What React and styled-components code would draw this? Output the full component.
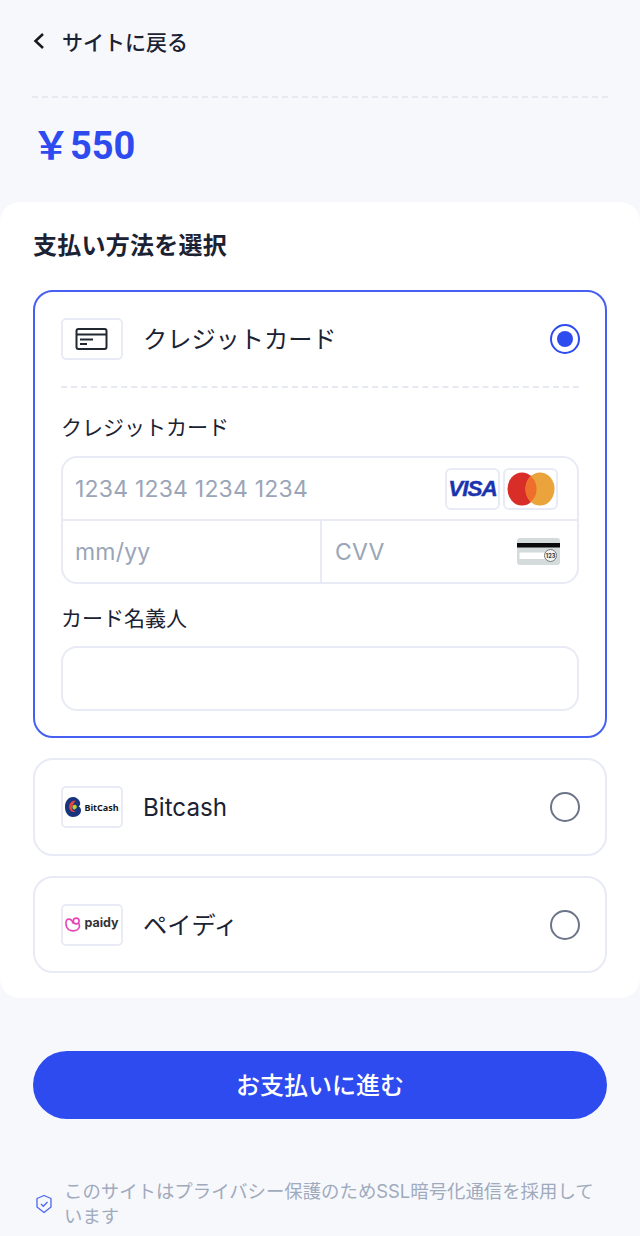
import styled, { createGlobalStyle } from "styled-components";

const GlobalStyle = createGlobalStyle`
    html, body {
        margin: 0;
        padding: 0;
        background: #f7f8fc;
    }
    * {
        box-sizing: border-box;
    }
    body {
        font-family: Inter, "Noto Sans CJK JP", sans-serif;
        color: #1a2233;
    }
`;

const Page = styled.div`
    width: 640px;
    height: 1236px;
    overflow: hidden;
    background: #f7f8fc;
`;
const Top = styled.div`
    padding: 0 32px;
    height: 202px;
`;
const BackRow = styled.div`
    height: 98px;
    padding-bottom: 14px;
    display: flex;
    align-items: center;
    gap: 15px;
    font-size: 21px;
    font-weight: 500;
    border-bottom: 2px dashed #e6e9f2;
`;
const Price = styled.div`
    margin-top: 23px;
    height: 50px;
    line-height: 50px;
    font-size: 38px;
    font-weight: 700;
    color: #2e4bf0;
    font-family: Roboto, "Noto Sans CJK JP", sans-serif;
`;
const Panel = styled.div`
    background: #fff;
    border-radius: 20px;
    height: 796px;
    padding: 28px 33px 0;
`;
const PanelTitle = styled.div`
    height: 32px;
    line-height: 32px;
    font-size: 24px;
    font-weight: 700;
    letter-spacing: 0.25px;
    margin-bottom: 28px;
`;
const Card = styled.div`
    border: 2px solid ${(props) => (props.$active ? "#4560f2" : "#e8ebf5")};
    border-radius: 20px;
    padding: 0 26px;
    margin-bottom: 20px;
    height: ${(props) => props.$height}px;
`;
const CardHead = styled.div`
    display: flex;
    align-items: center;
    gap: 20px;
    height: ${(props) => props.$height}px;
    font-size: 24.2px;
    font-weight: 400;
`;
const LogoBox = styled.div`
    width: 62px;
    height: 42px;
    flex: none;
    border: 2px solid #e8ebf5;
    border-radius: 5px;
    background: #fff;
    display: flex;
    align-items: center;
    justify-content: center;
    gap: ${(props) => props.$gap || 0}px;
`;
const Name = styled.div`
    flex: 1;
    margin-bottom: ${(props) => (props.$raised ? "3px" : "0")};
`;
const Radio = styled.div`
    width: 30px;
    height: 30px;
    margin-right: -1px;
    border-radius: 50%;
    border: 2px solid ${(props) => (props.$checked ? "#2e4bf0" : "#6b7488")};
    display: flex;
    align-items: center;
    justify-content: center;
    &::after {
        content: "";
        display: ${(props) => (props.$checked ? "block" : "none")};
        width: 16px;
        height: 16px;
        border-radius: 50%;
        background: #2e4bf0;
    }
`;
const Dashed = styled.div`
    border-top: 2px dashed #e6e9f2;
`;
const Label = styled.div`
    height: 28px;
    line-height: 28px;
    font-size: 21px;
    margin-top: ${(props) => props.$top}px;
    margin-bottom: ${(props) => props.$bottom}px;
`;
const FormBox = styled.div`
    border: 2px solid #e8ebf5;
    border-radius: 16px;
    background: #fff;
`;
const NumberRow = styled.div`
    height: 63px;
    display: flex;
    align-items: center;
    justify-content: space-between;
    padding: 0 19px 0 12px;
    border-bottom: 2px solid #e8ebf5;
`;
const SplitRow = styled.div`
    height: 61px;
    display: grid;
    grid-template-columns: 257px 1fr;
`;
const SplitCell = styled.div`
    display: flex;
    align-items: center;
    justify-content: space-between;
    padding: 0 17px 0 ${(props) => (props.$divided ? "13px" : "12px")};
    border-left: ${(props) => (props.$divided ? "2px solid #e8ebf5" : "none")};
`;
const Placeholder = styled.span`
    font-size: 23px;
    color: #9aa5b8;
    letter-spacing: 0.2px;
`;
const BrandRow = styled.div`
    display: flex;
    gap: 3px;
`;
const BrandBox = styled.div`
    width: 55px;
    height: 42px;
    border: 2px solid #e8ebf5;
    border-radius: 6px;
    display: flex;
    align-items: center;
    justify-content: center;
`;
const VisaText = styled.span`
    font-family: "Liberation Sans", sans-serif;
    font-size: 22.5px;
    font-weight: 700;
    font-style: italic;
    color: #1a34b0;
    letter-spacing: -1px;
    -webkit-text-stroke: 0.4px #1a34b0;
`;
const NameField = styled(FormBox)`
    height: 65px;
`;
const BitcashText = styled.span`
    font-family: "Noto Sans", sans-serif;
    font-size: 9px;
    font-weight: 700;
    color: #14181f;
`;
const PaidyText = styled.span`
    font-family: Inter, sans-serif;
    font-size: 12.5px;
    font-weight: 700;
    color: #333;
    line-height: 1;
    padding-bottom: 3px;
`;
const PayButton = styled.div`
    margin: 53px 33px 0;
    height: 68px;
    padding-bottom: 3px;
    border-radius: 34px;
    background: #2e4bf0;
    color: #fff;
    display: flex;
    align-items: center;
    justify-content: center;
    font-size: 24px;
    font-weight: 500;
`;
const Notice = styled.div`
    margin: 60px 33px 0 35px;
    display: flex;
    align-items: center;
    gap: 11px;
    font-size: 18.4px;
    line-height: 25px;
    color: #a0aabd;
`;
const ShieldSvg = styled.svg`
    flex: none;
`;

const CardIcon = () => (
    <svg width="34" height="24" viewBox="0 0 34 24" fill="none" stroke="#222831" strokeWidth="2">
        <rect x="1.5" y="2" width="30" height="20" rx="2" />
        <path d="M2 7.5h30M5 12.5h13M5 17h7" />
    </svg>
);

const MasterIcon = () => (
    <svg width="48" height="34" viewBox="0 0 48 34">
        <ellipse cx="15" cy="17" rx="14.500" ry="16.500" fill="#d92d27" />
        <ellipse cx="33" cy="17" rx="14.500" ry="16.500" fill="#eba33c" />
        <path d="M24 4.500c3.500 2.800 5.500 7.500 5.500 12.500s-2 9.700-5.500 12.500c-3.500-2.800-5.500-7.500-5.500-12.500s2-9.700 5.500-12.500z" fill="#ee6f2c" />
    </svg>
);

const CvvIcon = () => (
    <svg width="43" height="27" viewBox="0 0 43 27">
        <rect width="43" height="27" rx="3" fill="#d3dbdb" />
        <rect y="5" width="43" height="4.500" fill="#0a0a0a" />
        <rect x="2.500" y="14.500" width="26" height="6.500" fill="#fff" />
        <circle cx="33.500" cy="17.500" r="6" fill="#f4f4f4" stroke="#777" strokeWidth="1" />
        <text x="33.500" y="19.500" fontSize="5.500" fontWeight="700" fontFamily="Inter" textAnchor="middle" fill="#333">123</text>
    </svg>
);

const BitcashIcon = () => (
    <svg width="16" height="20" viewBox="0 0 16 20">
        <path d="M8 0C3 0 0 4.500 0 10s3 10 8 10c5 0 8-3.200 8-6.500 0-2-1-3.500-2.300-4C15 8.500 15.500 7 15 5 14 2 11 0 8 0z" fill="#17357f" />
        <path d="M10.500 3.500C6.500 3.500 3.500 7 4.300 11c.7 3.500 3.700 5 6.700 3.500-3 0-4.700-2.500-3.700-5 .6-2 2-3.500 3.200-6z" fill="#e8423f" />
        <path d="M8 8.500c1-1.200 3.500-1.200 3.800 1 .2 2-2 3.500-3.300 2.700C7.300 11.500 7 9.700 8 8.500z" fill="#b9cf2c" />
    </svg>
);

const PaidyIcon = () => (
    <svg width="16" height="15" viewBox="0 0 16 15" fill="none" stroke="#e645b8" strokeWidth="1.600" strokeLinecap="round">
        <circle cx="11.200" cy="4" r="2.900" />
        <path d="M8 6C7 1.500 1.500.5 1 5c-.3 3 .8 6 2.700 7.700 2 1.500 6.500 1.500 8.800 0 2-1.500 2.300-4 1.300-6" />
    </svg>
);

const ShieldIcon = () => (
    <ShieldSvg width="18" height="20" viewBox="0 0 18 20" fill="none" stroke="#4a66f2" strokeWidth="1.300">
        <path d="M9 1.500l7 3v8.500l-7 5.500-7-5.500V4.500z" strokeLinejoin="round" />
        <path d="M6 10l2.300 2.300L12.500 8" />
    </ShieldSvg>
);

const App = () => {
    return (
        <Page>
            <GlobalStyle />
            <Top>
                <BackRow>
                    <svg width="15" height="20" viewBox="0 0 15 20" fill="none" stroke="#14181f" strokeWidth="2.500">
                        <path d="M11 3L3.500 10l7.500 7" />
                    </svg>
                    サイトに戻る
                </BackRow>
                <Price>￥550</Price>
            </Top>
            <Panel>
                <PanelTitle>支払い方法を選択</PanelTitle>
                <Card $active $height={448}>
                    <CardHead $height={94}>
                        <LogoBox>
                            <CardIcon />
                        </LogoBox>
                        <Name $raised>クレジットカード</Name>
                        <Radio $checked />
                    </CardHead>
                    <Dashed />
                    <Label $top={26} $bottom={14}>クレジットカード</Label>
                    <FormBox>
                        <NumberRow>
                            <Placeholder>1234 1234 1234 1234</Placeholder>
                            <BrandRow>
                                <BrandBox>
                                    <VisaText>VISA</VisaText>
                                </BrandBox>
                                <BrandBox>
                                    <MasterIcon />
                                </BrandBox>
                            </BrandRow>
                        </NumberRow>
                        <SplitRow>
                            <SplitCell>
                                <Placeholder>mm/yy</Placeholder>
                            </SplitCell>
                            <SplitCell $divided>
                                <Placeholder>CVV</Placeholder>
                                <CvvIcon />
                            </SplitCell>
                        </SplitRow>
                    </FormBox>
                    <Label $top={21} $bottom={13}>カード名義人</Label>
                    <NameField />
                </Card>
                <Card $height={98}>
                    <CardHead $height={94}>
                        <LogoBox $gap={3}>
                            <BitcashIcon />
                            <BitcashText>BitCash</BitcashText>
                        </LogoBox>
                        <Name>Bitcash</Name>
                        <Radio />
                    </CardHead>
                </Card>
                <Card $height={97}>
                    <CardHead $height={93}>
                        <LogoBox $gap={3}>
                            <PaidyIcon />
                            <PaidyText>paidy</PaidyText>
                        </LogoBox>
                        <Name $raised>ペイディ</Name>
                        <Radio />
                    </CardHead>
                </Card>
            </Panel>
            <PayButton>お支払いに進む</PayButton>
            <Notice>
                <ShieldIcon />
                <span>このサイトはプライバシー保護のためSSL暗号化通信を採用しています</span>
            </Notice>
        </Page>
    );
};

export default App;
